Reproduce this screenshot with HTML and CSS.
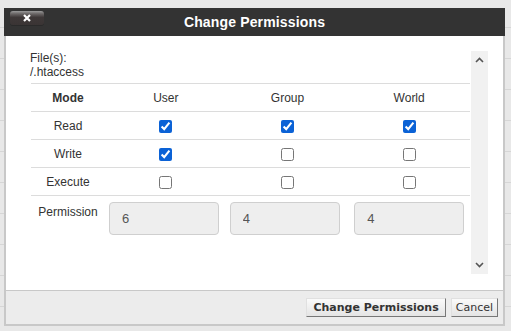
FILE: index.html
```html
<!DOCTYPE html>
<html lang="en">

<head>
    <meta charset="UTF-8">
    <title>Change Permissions</title>
    <link rel="stylesheet" href="styles.css">
</head>

<body>
    <!-- Dialog -->
    <div class="dialog">
        <div class="dialog-header">
            <button class="close-btn" aria-label="Close">
                <svg width="8" height="8" viewBox="0 0 8 8"><path d="M1 1 L7 7 M7 1 L1 7" stroke="#fff" stroke-width="2.2"/></svg>
            </button>
            <h1>Change Permissions</h1>
        </div>

        <div class="dialog-body">
            <div class="scroll-box">
                <div class="scroll-content">
                    <p class="files">File(s):<br>/.htaccess</p>
                    <table class="perm-table">
                        <tr>
                            <th>Mode</th>
                            <td>User</td>
                            <td>Group</td>
                            <td>World</td>
                        </tr>
                        <tr>
                            <td>Read</td>
                            <td><input type="checkbox" checked></td>
                            <td><input type="checkbox" checked></td>
                            <td><input type="checkbox" checked></td>
                        </tr>
                        <tr>
                            <td>Write</td>
                            <td><input type="checkbox" checked></td>
                            <td><input type="checkbox"></td>
                            <td><input type="checkbox"></td>
                        </tr>
                        <tr>
                            <td>Execute</td>
                            <td><input type="checkbox"></td>
                            <td><input type="checkbox"></td>
                            <td><input type="checkbox"></td>
                        </tr>
                        <tr class="perm-row">
                            <td>Permission</td>
                            <td><input class="perm-input" type="text" value="6" readonly></td>
                            <td><input class="perm-input" type="text" value="4" readonly></td>
                            <td><input class="perm-input" type="text" value="4" readonly></td>
                        </tr>
                    </table>
                </div>
                <!-- Scrollbar -->
                <div class="scroll-track">
                    <svg width="9" height="6" viewBox="0 0 9 6"><path d="M1 5 L4.5 1.5 L8 5" fill="none" stroke="#555" stroke-width="1.6"/></svg>
                    <svg width="9" height="6" viewBox="0 0 9 6"><path d="M1 1 L4.5 4.5 L8 1" fill="none" stroke="#555" stroke-width="1.6"/></svg>
                </div>
            </div>
        </div>

        <div class="dialog-footer">
            <button class="btn btn-primary">Change Permissions</button>
            <button class="btn">Cancel</button>
        </div>
    </div>
</body>

</html>
```

FILE: styles.css
```css
/* General Styles */
body {
    margin: 0;
    padding: 8px 0 0 4px;
    height: 331px;
    box-sizing: border-box;
    font-family: 'Liberation Sans', Arial, sans-serif;
    color: #333;
    background-color: #e8e8e8;
    background-image: repeating-linear-gradient(to bottom, transparent 0, transparent 27px, #d6d6d6 27px, #d6d6d6 28px, transparent 28px, transparent 31px);
    overflow: hidden;
}

/* Dialog */
.dialog {
    width: 501px;
    display: flex;
    flex-direction: column;
}

.dialog-header {
    position: relative;
    height: 28px;
    background-color: #333;
    display: flex;
    align-items: center;
    justify-content: center;
}

.dialog-header h1 {
    margin: 0;
    font-size: 14px;
    font-weight: bold;
    color: #fff;
    letter-spacing: 0.15px;
}

.close-btn {
    position: absolute;
    left: 6px;
    top: 3px;
    width: 34px;
    height: 14px;
    padding: 0;
    border: none;
    border-radius: 3px;
    background: linear-gradient(to bottom, #9a9a9a 0, #6a6666 20%, #3e3838 45%, #3a3434 100%);
    box-shadow: 0 1px 0 #2a2a2a;
    display: flex;
    align-items: center;
    justify-content: center;
}

.dialog-body {
    background-color: #fff;
    border-left: 2px solid #c8c8c8;
    border-right: 2px solid #c8c8c8;
    padding: 15px 15px 16px 24px;
}

.scroll-box {
    display: flex;
    height: 223px;
}

.scroll-content {
    flex: 1;
}

.scroll-track {
    width: 17px;
    background-color: #f1f1f1;
    display: flex;
    flex-direction: column;
    justify-content: space-between;
    align-items: center;
    padding: 6px 0;
}

.files {
    margin: 0 0 4px 0;
    font-size: 12px;
    line-height: 14px;
}

/* Permissions table */
.perm-table {
    width: 439px;
    margin-left: 1px;
    border-collapse: collapse;
    table-layout: fixed;
    font-size: 12px;
}

.perm-table th,
.perm-table td {
    border-top: 1px solid #dcdcdc;
    height: 27px;
    padding: 0;
    text-align: center;
    vertical-align: middle;
}

.perm-table th {
    width: 74px;
    font-weight: bold;
}

.perm-table input[type="checkbox"] {
    margin: 0;
    width: 13px;
    height: 13px;
    vertical-align: middle;
    accent-color: #0b62d6;
}

.perm-row td {
    vertical-align: top;
    padding-top: 6px;
}

.perm-row td:first-child {
    padding-top: 9px;
}

.perm-row td:nth-child(2) {
    text-align: left;
    padding-left: 4px;
}

.perm-row td:nth-child(3) {
    text-align: left;
    padding-left: 3px;
}

.perm-input {
    width: 110px;
    height: 33px;
    box-sizing: border-box;
    padding: 0 12px;
    border: 1px solid #cfcfcf;
    border-radius: 4px;
    background-color: #eee;
    color: #555;
    font-family: 'Liberation Sans', Arial, sans-serif;
    font-size: 13px;
}

/* Footer */
.dialog-footer {
    height: 26px;
    box-sizing: content-box;
    background-color: #ececec;
    border: 2px solid #c8c8c8;
    border-top: 1px solid #c8c8c8;
    display: flex;
    justify-content: flex-end;
    align-items: flex-start;
    gap: 5px;
    padding: 7px 5px 0 0;
}

.btn {
    height: 19px;
    padding: 0 4px;
    font-family: 'DejaVu Sans', Verdana, sans-serif;
    font-size: 11px;
    color: #333;
    background: linear-gradient(to bottom, #fafafa, #e4e4e4);
    border: 1px solid;
    border-color: #e0e0e0 #777 #777 #e0e0e0;
    border-radius: 0;
}

.btn-primary {
    font-weight: bold;
    padding: 0 6px;
}
```
